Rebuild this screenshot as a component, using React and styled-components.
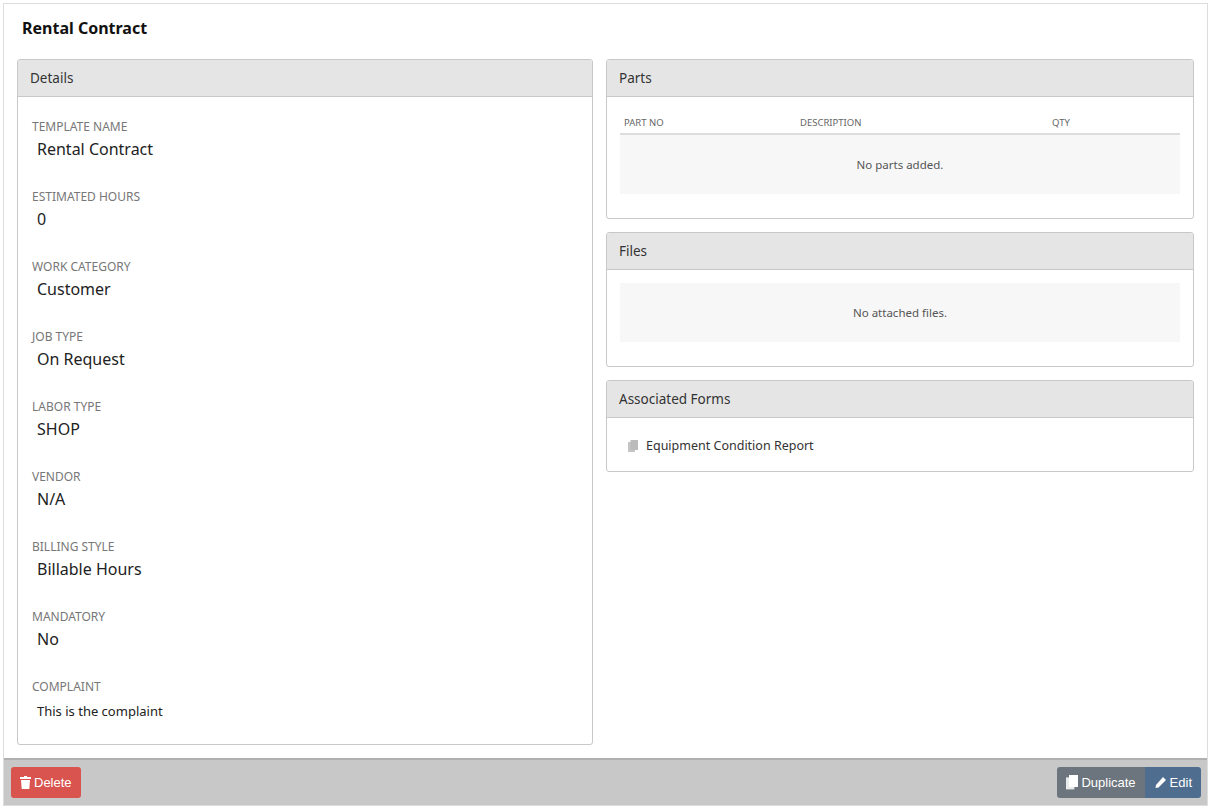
import React from "react";
import styled, { createGlobalStyle } from "styled-components";

const Global = createGlobalStyle`
  html,body{margin:0;padding:0;background:#fff;}
  body{font-family:"Noto Sans","Open Sans",sans-serif;color:#222;}
  *{box-sizing:border-box;}
`;
const Frame = styled.div`
  margin:3px 5px 0 3px;height:803px;border:1px solid #ddd;display:flex;flex-direction:column;
`;
const Title = styled.h1`
  margin:0;padding:13px 18px 0;height:55px;font-size:16px;font-weight:700;color:#111;
`;
const Body = styled.div`
  flex:1;display:grid;grid-template-columns:576px 588px;gap:13px;padding:0 13px 13px 13px;align-items:start;
`;
const Col = styled.div`display:flex;flex-direction:column;gap:13px;`;
const Panel = styled.div`
  border:1px solid #c8c8c8;border-radius:3px;background:#fff;overflow:hidden;
  height:${p=>p.h?p.h+"px":"auto"};
`;
const PanelHead = styled.div`
  height:37px;background:#e5e5e5;border-bottom:1px solid #c8c8c8;padding:0 12px;
  display:flex;align-items:center;font-size:13.5px;color:#333;
`;
const DetailsBody = styled.div`padding:22px 14px 0;`;
const Field = styled.div`height:70px;`;
const Label = styled.div`font-size:12px;color:#777;text-transform:uppercase;line-height:16px;`;
const Value = styled.div`font-size:${p=>p.small?"13px":"16px"};color:#222;padding-left:5px;margin-top:${p=>p.small?"5px":"3px"};line-height:22px;`;
const PBody = styled.div`padding:${p=>p.pad||"13px"};`;
const THead = styled.div`
  display:grid;grid-template-columns:176px 252px 1fr;padding:6px 4px 4px;font-size:9.5px;color:#666;
  text-transform:uppercase;border-bottom:2px solid #ddd;
`;
const Empty = styled.div`
  height:59px;background:#f7f7f7;display:flex;align-items:center;justify-content:center;font-size:11.5px;color:#555;
`;
const FormRow = styled.div`display:flex;align-items:center;gap:8px;padding:19px 0 17px 21px;font-size:12.5px;color:#333;`;
const Footer = styled.div`
  height:47px;background:#c8c8c8;border-top:2px solid #b0b0b0;display:flex;align-items:center;justify-content:space-between;padding:0 6px 0 7px;
`;
const Btn = styled.button`
  border:none;height:31px;padding:0 9px;color:#fff;font-family:"Liberation Sans",sans-serif;font-size:13px;
  background:${p=>p.bg};display:flex;align-items:center;gap:3px;border-radius:${p=>p.r||"3px"};
`;
const Group = styled.div`display:flex;`;

const CopyIcon = ({c="#fff",s=12}) => (
  <svg width={s} height={s*1.2} viewBox="0 0 10 12"><rect x="0" y="2" width="7" height="10" fill={c} opacity=".85"/><rect x="2.5" y="0" width="7.5" height="10" fill={c}/></svg>
);
const Trash = () => (
  <svg width="11" height="13" viewBox="0 0 11 13" fill="#fff"><rect x="0" y="1" width="11" height="2"/><rect x="4" y="0" width="3" height="1"/><path d="M1 4h9l-.7 9H1.7z"/></svg>
);
const Pencil = () => (
  <svg width="13" height="13" viewBox="0 0 13 13" fill="#fff"><path d="M9 1l3 3-7.5 7.5-3 .5.5-3z"/></svg>
);

const fields = [["Template Name","Rental Contract"],["Estimated Hours","0"],["Work Category","Customer"],["Job Type","On Request"],["Labor Type","SHOP"],["Vendor","N/A"],["Billing Style","Billable Hours"],["Mandatory","No"]];

export default function App(){
  return <>
    <Global/>
    <Frame>
      <Title>Rental Contract</Title>
      <Body>
        <Panel h={686}>
          <PanelHead>Details</PanelHead>
          <DetailsBody>
            {fields.map(([l,v])=><Field key={l}><Label>{l}</Label><Value>{v}</Value></Field>)}
            <Field><Label>Complaint</Label><Value small>This is the complaint</Value></Field>
          </DetailsBody>
        </Panel>
        <Col>
          <Panel h={160}>
            <PanelHead>Parts</PanelHead>
            <PBody pad="13px 13px 0"><THead><span>Part No</span><span>Description</span><span>Qty</span></THead><Empty>No parts added.</Empty></PBody>
          </Panel>
          <Panel h={135}>
            <PanelHead>Files</PanelHead>
            <PBody><Empty>No attached files.</Empty></PBody>
          </Panel>
          <Panel>
            <PanelHead>Associated Forms</PanelHead>
            <FormRow><CopyIcon c="#bbb" s={10}/>Equipment Condition Report</FormRow>
          </Panel>
        </Col>
      </Body>
      <Footer>
        <Btn bg="#d9534f"><Trash/>Delete</Btn>
        <Group>
          <Btn bg="#6c757d" r="3px 0 0 3px"><CopyIcon/>Duplicate</Btn>
          <Btn bg="#4f6d8f" r="0 3px 3px 0"><Pencil/>Edit</Btn>
        </Group>
      </Footer>
    </Frame>
  </>;
}
